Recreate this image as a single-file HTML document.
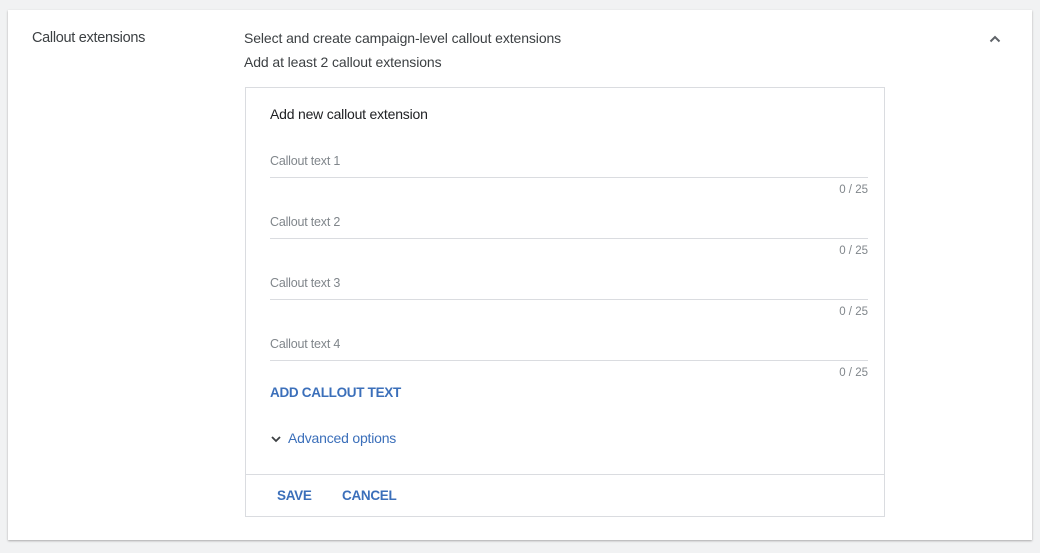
<!DOCTYPE html>
<html><head><style>
body{margin:0;width:1040px;height:553px;background:#f1f2f3;font-family:"Liberation Sans",sans-serif;position:relative;overflow:hidden}
.card{position:absolute;left:8px;top:10px;width:1024px;height:530px;background:#fff;box-shadow:0 1px 2px rgba(0,0,0,.3)}
.a{position:absolute;white-space:nowrap}
.box{position:absolute;left:245px;top:87px;width:638px;height:428px;border:1px solid #dadce0;background:#fff}
.ph{color:#80868b;font-size:12.5px;left:24px;letter-spacing:-0.2px}
.ln{position:absolute;left:24px;width:598px;height:1px;background:#dadce0}
.ct{color:#80868b;font-size:11.5px;right:16px}
.blue{color:#3b6fba;font-weight:bold;font-size:13.5px;letter-spacing:-0.3px}
</style></head><body>
<div class="card"></div>
<div class="a" style="left:32px;top:30px;font-size:14.5px;color:#3c4043;letter-spacing:-0.3px">Callout extensions</div>
<div class="a" style="left:244px;top:30px;font-size:14px;color:#3c4043;letter-spacing:-0.1px">Select and create campaign-level callout extensions</div>
<div class="a" style="left:244px;top:54px;font-size:14px;color:#3c4043;letter-spacing:-0.1px">Add at least 2 callout extensions</div>
<svg class="a" style="left:988px;top:32px" width="14" height="14" viewBox="0 0 14 14"><path d="M2.5 9.5L7 5l4.5 4.5" fill="none" stroke="#5f6368" stroke-width="2"/></svg>
<div class="box">
<div class="a" style="left:24px;top:18px;font-size:14px;color:#202124;letter-spacing:-0.2px">Add new callout extension</div>
<div class="a ph" style="top:66px">Callout text 1</div><div class="ln" style="top:89px"></div><div class="a ct" style="top:96px">0 / 25</div>
<div class="a ph" style="top:127px">Callout text 2</div><div class="ln" style="top:150px"></div><div class="a ct" style="top:157px">0 / 25</div>
<div class="a ph" style="top:188px">Callout text 3</div><div class="ln" style="top:211px"></div><div class="a ct" style="top:218px">0 / 25</div>
<div class="a ph" style="top:249px">Callout text 4</div><div class="ln" style="top:272px"></div><div class="a ct" style="top:279px">0 / 25</div>
<div class="a blue" style="left:24px;top:297px">ADD CALLOUT TEXT</div>
<svg class="a" style="left:24px;top:346px" width="12" height="10" viewBox="0 0 12 10"><path d="M2 3l4 4 4-4" fill="none" stroke="#3c4043" stroke-width="1.8"/></svg>
<div class="a" style="left:42px;top:342px;font-size:14px;color:#3b6fba;letter-spacing:-0.2px">Advanced options</div>
<div style="position:absolute;left:0;top:386px;width:638px;height:1px;background:#dadce0"></div>
<div class="a blue" style="left:31px;top:400px">SAVE</div>
<div class="a blue" style="left:96px;top:400px">CANCEL</div>
</div>
</body></html>
